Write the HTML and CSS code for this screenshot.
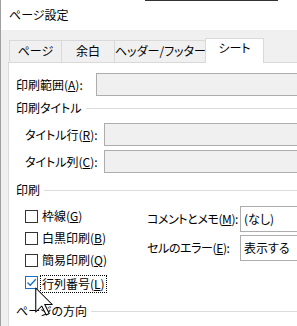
FILE: index.html
```html
<!DOCTYPE html>
<html lang="ja">

<head>
  <meta charset="UTF-8">
  <title>ページ設定</title>
  <link rel="stylesheet" href="styles.css">
</head>

<body>
  <div id="dialog">
    <div class="caption">ページ設定</div>
    <div class="tabs">
      <div class="tab t-page">ページ</div>
      <div class="tab t-margin">余白</div>
      <div class="tab t-header">ヘッダー/フッター</div>
      <div class="tab t-sheet active">シート</div>
    </div>
    <div class="sheet">
      <div class="row">
        <label class="lbl lbl-range">印刷範囲(<u>A</u>):</label>
        <div class="edit off"></div>
      </div>
      <div class="group">印刷タイトル</div>
      <div class="row sub">
        <label class="lbl lbl-title">タイトル行(<u>R</u>):</label>
        <div class="edit off"></div>
      </div>
      <div class="row sub">
        <label class="lbl lbl-title">タイトル列(<u>C</u>):</label>
        <div class="edit off"></div>
      </div>
      <div class="group print-head">印刷</div>
      <div class="print">
        <div class="checks">
          <div class="check"><span class="box"></span><span class="txt">枠線(<u>G</u>)</span></div>
          <div class="check"><span class="box"></span><span class="txt">白黒印刷(<u>B</u>)</span></div>
          <div class="check"><span class="box"></span><span class="txt">簡易印刷(<u>Q</u>)</span></div>
          <div class="check on">
            <span class="box">
              <svg width="11" height="11" viewBox="0 0 11 11"><path d="M1.5 5.5 L4.2 8.2 L9.8 2.2" fill="none" stroke="#1a6fc4" stroke-width="1.3"/></svg>
            </span>
            <span class="txt focus">行列番号(<u>L</u>)</span>
          </div>
        </div>
        <div class="combos">
          <div class="combo-row">
            <label class="lbl lbl-combo">コメントとメモ(<u>M</u>):</label>
            <div class="combo">(なし)</div>
          </div>
          <div class="combo-row">
            <label class="lbl lbl-combo">セルのエラー(<u>E</u>):</label>
            <div class="combo">表示する</div>
          </div>
        </div>
      </div>
      <div class="group orient-head">ページの方向</div>
    </div>
    <!-- mouse pointer over the checkbox -->
    <svg class="pointer" width="18" height="29" viewBox="0 0 12 19">
      <path d="M0.5 0.5 L0.5 16.5 L4.5 12.5 L7.5 18.5 L9.5 17.5 L6.5 11.5 L11.5 11.5 Z" fill="#fff" stroke="#000" stroke-width="0.7" stroke-linejoin="round"/>
    </svg>
  </div>
</body>

</html>
```

FILE: styles.css
```css
* {
  margin: 0;
  padding: 0;
  box-sizing: border-box;
}

body {
  width: 297px;
  height: 326px;
  overflow: hidden;
  background: #f0f0f0;
  color: #000;
  font: 12px/16px "Noto Sans CJK JP", sans-serif;
  font-feature-settings: "palt";
}

#dialog {
  position: relative;
  display: flex;
  flex-direction: column;
  height: 326px;
  border-left: 1px solid #a0a0a0;
}

.caption {
  position: relative;
  height: 31px;
  background: #fff;
  padding: 7px 0 0 8px;
}

/* 後ろのウィンドウの縁 */
.caption::before {
  content: "";
  position: absolute;
  top: 0;
  left: 144px;
  width: 133px;
  height: 1px;
  background: #333;
}

/* タブ */
.tabs {
  display: flex;
  align-items: flex-end;
  padding: 8px 0 0 8px;
}

.tab {
  height: 22px;
  border: 1px solid #d9d9d9;
  border-bottom: 0;
  margin-left: -1px;
  background: #f0f0f0;
  text-align: center;
  line-height: 20px;
  white-space: nowrap;
}

.t-page {
  width: 53px;
  margin-left: 0;
}

.t-margin {
  width: 54px;
}

.t-header {
  width: 92px;
}

.t-sheet {
  width: 59px;
}

.tab.active {
  position: relative;
  z-index: 1;
  height: 25px;
  margin-bottom: -1px;
  background: #fff;
  line-height: 18px;
}

/* シート */
.sheet {
  flex: 1;
  margin-left: 7px;
  padding: 10px 0 0 7px;
  background: #fff;
  border-top: 1px solid #d9d9d9;
  border-left: 1px solid #d9d9d9;
}

.row {
  display: flex;
  align-items: center;
  height: 23px;
}

.sub {
  padding-left: 9px;
}

.sub + .sub {
  margin-top: 4px;
}

.lbl {
  flex: none;
  white-space: nowrap;
}

.lbl-range {
  width: 80px;
}

.lbl-title {
  width: 79px;
}

.lbl-combo {
  width: 93px;
  letter-spacing: -0.4px;
}

.edit {
  flex: 1;
  height: 23px;
  border: 1px solid #adadad;
  border-right: 0;
  background: #fff;
}

.edit.off {
  background: #f0f0f0;
}

.group {
  display: flex;
  align-items: center;
  height: 16px;
  margin: 4px 0 7px;
}

.group::after {
  content: "";
  flex: 1;
  margin-left: 4px;
  border-top: 1px solid #dcdcdc;
}

.print-head {
  margin-top: 9px;
}

.orient-head {
  margin-top: 10px;
}

/* 印刷 */
.print {
  display: flex;
}

.checks {
  width: 131px;
  padding-left: 9px;
}

.check {
  display: flex;
  align-items: center;
  height: 22px;
}

.box {
  width: 13px;
  height: 13px;
  margin-right: 4px;
  border: 1px solid #333;
  background: #fff;
}

.box svg {
  display: block;
}

.check.on .box {
  margin-right: 2px;
  border-color: #1a6fc4;
}

.focus {
  margin-top: 3px;
  padding: 0 1px;
  border: 1px dotted #000;
}

.combos {
  flex: 1;
  display: flex;
  flex-direction: column;
  gap: 3px;
  padding-top: 1px;
}

.combo-row {
  display: flex;
  align-items: center;
}

.combo {
  flex: 1;
  height: 26px;
  padding-left: 3px;
  border: 1px solid #adadad;
  border-right: 0;
  line-height: 24px;
}

.pointer {
  position: absolute;
  left: 34px;
  top: 287px;
}
```
